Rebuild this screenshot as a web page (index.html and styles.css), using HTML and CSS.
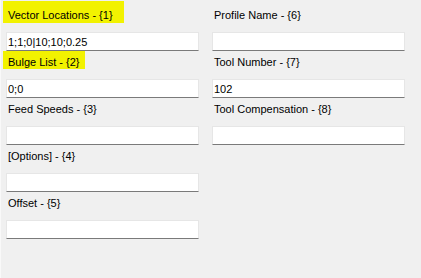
FILE: index.html
```html
<!DOCTYPE html>
<html lang="en">
<head>
  <meta charset="UTF-8">
  <title>Profile Parameters</title>
  <link rel="stylesheet" href="styles.css">
</head>
<body>
  <div class="panel">
    <div class="column">
      <!-- Vector Locations -->
      <div class="field">
        <label for="vectors"><span class="mark wide">Vector Locations - {1}</span></label>
        <input type="text" id="vectors" value="1;1;0|10;10;0.25">
      </div>
      <!-- Bulge List -->
      <div class="field">
        <label for="bulges"><span class="mark">Bulge List - {2}</span></label>
        <input type="text" id="bulges" value="0;0">
      </div>
      <!-- Feed Speeds -->
      <div class="field">
        <label for="feeds">Feed Speeds - {3}</label>
        <input type="text" id="feeds">
      </div>
      <!-- Options -->
      <div class="field">
        <label for="options">[Options] - {4}</label>
        <input type="text" id="options">
      </div>
      <!-- Offset -->
      <div class="field">
        <label for="offset">Offset - {5}</label>
        <input type="text" id="offset">
      </div>
    </div>
    <div class="column">
      <!-- Profile Name -->
      <div class="field">
        <label for="profile">Profile Name - {6}</label>
        <input type="text" id="profile">
      </div>
      <!-- Tool Number -->
      <div class="field">
        <label for="tool">Tool Number - {7}</label>
        <input type="text" id="tool" value="102">
      </div>
      <!-- Tool Compensation -->
      <div class="field">
        <label for="comp">Tool Compensation - {8}</label>
        <input type="text" id="comp">
      </div>
    </div>
  </div>
</body>
</html>
```

FILE: styles.css
```css
html, body {
  margin: 0;
  height: 100%;
}
body {
  font-family: "Liberation Sans", Arial, sans-serif;
  font-size: 11px;
  color: #000;
  background-color: #f0f0f0;
  border-left: 1px solid #f9f9f9;
  box-sizing: border-box;
}
.panel {
  display: grid;
  grid-template-columns: 193px 193px;
  column-gap: 13px;
  padding: 4px 0 0 5px;
}
.field {
  display: flex;
  flex-direction: column;
  height: 47px;
}
label {
  display: block;
  height: 28px;
  line-height: 22px;
  padding-left: 2px;
}
.mark {
  display: inline-block;
  vertical-align: top;
  box-sizing: border-box;
  height: 18px;
  line-height: 22px;
  padding: 0 5px;
  margin-left: -5px;
  background-color: #f2f200;
}
.mark.wide {
  height: 22px;
  padding: 3px 11px 0 5px;
  margin-top: -3px;
}
input {
  box-sizing: border-box;
  height: 19px;
  margin: 0;
  padding: 0 1px;
  font-family: inherit;
  font-size: 11px;
  color: #000;
  background-color: #fff;
  border: 1px solid #e6e6e6;
  border-bottom-color: #7a7a7a;
  outline: none;
}
```
